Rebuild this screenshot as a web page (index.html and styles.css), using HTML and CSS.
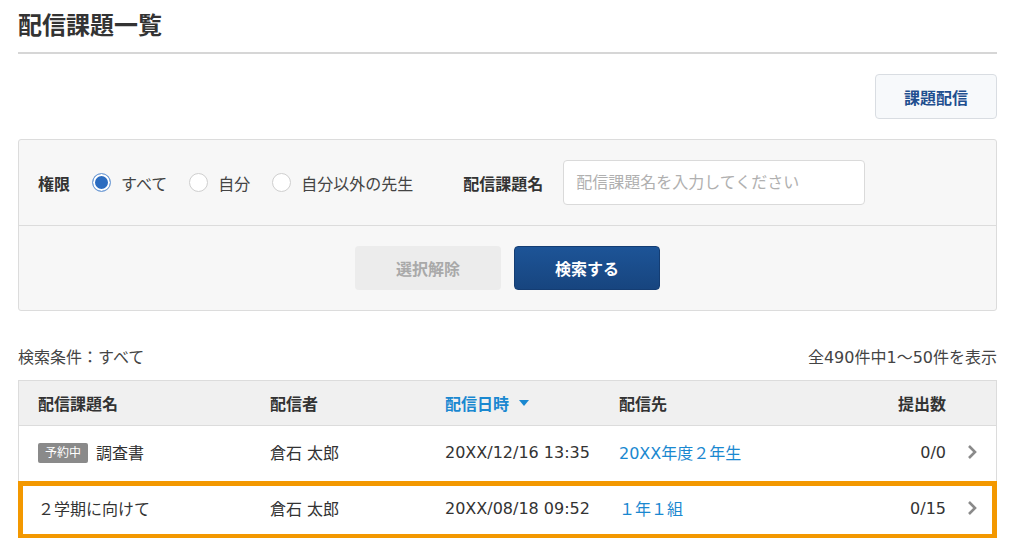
FILE: index.html
```html
<!DOCTYPE html>
<html>
<head>
  <link rel="stylesheet" href="styles.css">
</head>
<body>
  <div class="page">
    <h1 class="page-title">配信課題一覧</h1>

    <div class="toolbar">
      <button class="btn-outline">課題配信</button>
    </div>

    <div class="search-panel">
      <div class="search-row">
        <span class="field-label">権限</span>
        <label class="radio-item">
          <span class="radio checked"></span>すべて
        </label>
        <label class="radio-item">
          <span class="radio"></span>自分
        </label>
        <label class="radio-item">
          <span class="radio"></span>自分以外の先生
        </label>
        <span class="field-label name-label">配信課題名</span>
        <input type="text" class="text-input" placeholder="配信課題名を入力してください">
      </div>
      <div class="search-actions">
        <button class="btn-clear">選択解除</button>
        <button class="btn-search">検索する</button>
      </div>
    </div>

    <div class="result-info">
      <span>検索条件：すべて</span>
      <span>全490件中1～50件を表示</span>
    </div>

    <div class="list">
      <div class="list-row list-head">
        <div>配信課題名</div>
        <div>配信者</div>
        <div class="sorted">配信日時
          <svg width="10" height="6" viewBox="0 0 10 6"><path d="M0 0 L10 0 L5 6 Z" fill="#1a88d0"/></svg>
        </div>
        <div>配信先</div>
        <div class="num">提出数</div>
        <div></div>
      </div>
      <div class="list-row">
        <div><span class="badge">予約中</span>調査書</div>
        <div>倉石 太郎</div>
        <div>20XX/12/16 13:35</div>
        <div class="link">20XX年度２年生</div>
        <div class="num">0/0</div>
        <div class="chev">
          <svg width="10" height="16" viewBox="0 0 10 16"><path d="M2 2 L8 8 L2 14" fill="none" stroke="#8a8a8a" stroke-width="2.6"/></svg>
        </div>
      </div>
      <div class="list-row highlight">
        <div>２学期に向けて</div>
        <div>倉石 太郎</div>
        <div>20XX/08/18 09:52</div>
        <div class="link">１年１組</div>
        <div class="num">0/15</div>
        <div class="chev">
          <svg width="10" height="16" viewBox="0 0 10 16"><path d="M2 2 L8 8 L2 14" fill="none" stroke="#8a8a8a" stroke-width="2.6"/></svg>
        </div>
      </div>
    </div>
  </div>
</body>
</html>
```

FILE: styles.css
```css
body {
  margin: 0;
  font-family: "DejaVu Sans", "Noto Sans CJK JP", sans-serif;
  color: #333;
  background: #fff;
  font-size: 16px;
}
.page {
  padding: 0 15px 0 18px;
}
.page-title {
  margin: 10px 0 0;
  padding-bottom: 10px;
  font-size: 24px;
  line-height: 32px;
  font-weight: 700;
  color: #333;
  border-bottom: 2px solid #d6d6d6;
}
.toolbar {
  display: flex;
  justify-content: flex-end;
  margin-top: 20px;
}
button {
  font-family: inherit;
  font-size: 16px;
  font-weight: 700;
  cursor: pointer;
}
.btn-outline {
  width: 122px;
  height: 45px;
  border: 1px solid #d9dde2;
  border-radius: 4px;
  background: #f7f9fb;
  color: #1f4f8f;
}
.search-panel {
  margin-top: 20px;
  border: 1px solid #dcdcdc;
  border-radius: 3px;
  background: #f7f7f7;
}
.search-row {
  display: flex;
  align-items: center;
  padding: 20px 19px;
  border-bottom: 1px solid #dcdcdc;
}
.field-label {
  font-weight: 700;
  margin-right: 22px;
  color: #333;
}
.name-label {
  margin-left: 28px;
  margin-right: 20px;
}
.radio-item {
  display: flex;
  align-items: center;
  margin-right: 22px;
  color: #444;
}
.radio {
  box-sizing: border-box;
  width: 19px;
  height: 19px;
  border: 1px solid #cfcfcf;
  border-radius: 50%;
  background: #fff;
  margin-right: 10px;
}
.radio.checked {
  border-color: #7aa3d8;
  background: #2b6cc0;
  box-shadow: inset 0 0 0 2px #fff;
}
.text-input {
  box-sizing: border-box;
  width: 302px;
  height: 45px;
  padding: 0 12px;
  border: 1px solid #dadada;
  border-radius: 4px;
  background: #fff;
  font-family: inherit;
  font-size: 16px;
}
.text-input::placeholder {
  color: #b0b0b0;
}
.search-actions {
  display: flex;
  justify-content: center;
  gap: 13px;
  padding: 20px 0 20px;
}
.btn-clear {
  width: 146px;
  height: 44px;
  border: none;
  border-radius: 4px;
  background: #ececec;
  color: #a9a9a9;
}
.btn-search {
  width: 146px;
  height: 44px;
  border: 1px solid #143d73;
  border-radius: 4px;
  background: linear-gradient(#1d5497, #17457f);
  color: #fff;
}
.result-info {
  display: flex;
  justify-content: space-between;
  margin-top: 36px;
  margin-bottom: 11px;
  line-height: 22px;
  color: #444;
}
.list {
  border: 1px solid #dcdcdc;
  border-bottom: none;
}
.list-row {
  display: grid;
  grid-template-columns: 232px 175px 174px 1fr 100px 50px;
  align-items: center;
  height: 52px;
  padding: 0 0 3px 19px;
  border-bottom: 1px solid #dcdcdc;
  color: #333;
  background: #fff;
}
.list-head {
  height: 43px;
  padding-bottom: 1px;
  background: #f0f0f0;
  font-weight: 700;
}
.sorted {
  color: #1a88d0;
  display: flex;
  align-items: center;
  gap: 10px;
}
.num {
  text-align: right;
}
.chev {
  display: flex;
  justify-content: center;
  padding-left: 2px;
}
.link {
  color: #1a88d0;
}
.badge {
  display: inline-block;
  width: 50px;
  height: 20px;
  line-height: 20px;
  margin-right: 8px;
  border-radius: 2px;
  background: #8a8a8a;
  color: #fff;
  font-size: 12px;
  text-align: center;
  vertical-align: 2px;
}
.list-row.highlight {
  outline: 5px solid #f39800;
  outline-offset: -4px;
}
```
